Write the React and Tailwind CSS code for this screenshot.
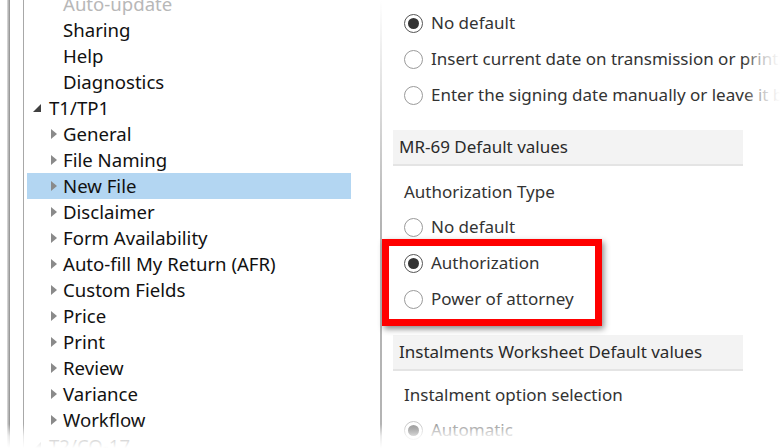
import React from 'react';

const tree = [
  { label: 'Auto-update', kind: 'leaf', faded: true },
  { label: 'Sharing', kind: 'leaf' },
  { label: 'Help', kind: 'leaf' },
  { label: 'Diagnostics', kind: 'leaf' },
  { label: 'T1/TP1', kind: 'open' },
  { label: 'General', kind: 'closed' },
  { label: 'File Naming', kind: 'closed' },
  { label: 'New File', kind: 'closed', selected: true },
  { label: 'Disclaimer', kind: 'closed' },
  { label: 'Form Availability', kind: 'closed' },
  { label: 'Auto-fill My Return (AFR)', kind: 'closed' },
  { label: 'Custom Fields', kind: 'closed' },
  { label: 'Price', kind: 'closed' },
  { label: 'Print', kind: 'closed' },
  { label: 'Review', kind: 'closed' },
  { label: 'Variance', kind: 'closed' },
  { label: 'Workflow', kind: 'closed' },
  { label: 'T2/CO-17', kind: 'open' },
];

function TreeRow({ item }) {
  const bg = item.selected ? 'bg-[#b3d6f2]' : '';
  if (item.kind === 'open') {
    return (
      <div className={`h-[26px] flex items-center ${bg}`}>
        <svg width="8" height="8" viewBox="0 0 8 8" className="ml-[6px] mr-[8px]">
          <polygon points="8,0 8,8 0,8" fill="#404040" />
        </svg>
        <span>{item.label}</span>
      </div>
    );
  }
  return (
    <div className={`h-[26px] flex items-center ${bg}`}>
      {item.kind === 'closed' ? (
        <svg width="6" height="10" viewBox="0 0 6 10" className="ml-[24px] mr-[6px]">
          <polygon points="0,0 6,5 0,10" fill="#8a8a8a" />
        </svg>
      ) : (
        <span className="w-[36px]" />
      )}
      <span className={item.faded ? 'text-[#b8b8b8]' : ''}>{item.label}</span>
    </div>
  );
}

function Radio({ checked, disabled, children }) {
  return (
    <div className="h-[36px] flex items-center gap-[8px]">
      <span
        className={`w-[19px] h-[19px] rounded-full border flex items-center justify-center bg-white ${
          disabled ? 'border-[#c8c8c8]' : checked ? 'border-[#555]' : 'border-[#9a9a9a]'
        }`}
      >
        {checked && (
          <span
            className={`w-[11px] h-[11px] rounded-full ${
              disabled ? 'bg-gradient-to-b from-[#9a9a9a] to-[#6a6a6a]' : 'bg-[#333]'
            }`}
          />
        )}
      </span>
      <span className={`whitespace-nowrap ${disabled ? 'text-[#9a9a9a]' : 'text-[#333]'}`}>{children}</span>
    </div>
  );
}

function SectionHeader({ children }) {
  return (
    <div className="ml-[11px] w-[350px] h-[36px] flex items-center px-[6px] bg-[#f3f3f3] border-b-2 border-[#e4e4e4] text-[#2a2a2a] whitespace-nowrap">
      {children}
    </div>
  );
}

export default function App() {
  return (
    <div className="relative w-[780px] h-[448px] overflow-hidden bg-white flex font-['Noto_Sans',sans-serif] text-[17px]">
      <div className="w-[23px] shrink-0 flex">
        <div className="ml-[7px] w-[3px] h-full bg-gradient-to-r from-[#e0e0e0] to-[#8c8c8c]" />
      </div>

      <div className="w-[357px] shrink-0 border-l border-[#a8a8a8] pl-[3px] text-[#111] text-[18.6px]">
        <div className="-mt-[9px] w-[324px]">
          {tree.map((item) => (
            <TreeRow key={item.label} item={item} />
          ))}
        </div>
      </div>

      <div className="w-[2px] shrink-0 bg-gradient-to-b from-white via-[#b4b4b4] to-[#b4b4b4]" />

      <div className="flex-1 flex flex-col">
        <div className="pl-[22px] mt-[5px]">
          <Radio checked>No default</Radio>
          <Radio>Insert current date on transmission or printing</Radio>
          <Radio>Enter the signing date manually or leave it blank</Radio>
        </div>
        <div className="mt-[17px]">
          <SectionHeader>MR-69 Default values</SectionHeader>
        </div>
        <div className="pl-[22px] mt-[9px] h-[36px] flex items-center text-[#333]">Authorization Type</div>
        <div className="pl-[22px]">
          <Radio>No default</Radio>
          <Radio checked>Authorization</Radio>
          <Radio>Power of attorney</Radio>
        </div>
        <div className="mt-[18px]">
          <SectionHeader>Instalments Worksheet Default values</SectionHeader>
        </div>
        <div className="pl-[22px] mt-[7px] h-[36px] flex items-center text-[#333]">Instalment option selection</div>
        <div className="pl-[22px]">
          <Radio checked disabled>Automatic</Radio>
        </div>
      </div>

      <div className="absolute left-[382px] top-[239px] w-[220px] h-[87px] border-[7px] border-[#ff0000] shadow-[2px_3px_6px_rgba(0,0,0,0.45)]" />

      <div className="absolute right-0 top-0 h-full w-[36px] bg-gradient-to-r from-transparent via-white/70 to-white" />
      <div className="absolute left-0 bottom-0 w-full h-[24px] bg-gradient-to-b from-transparent via-white/75 to-white" />
    </div>
  );
}
